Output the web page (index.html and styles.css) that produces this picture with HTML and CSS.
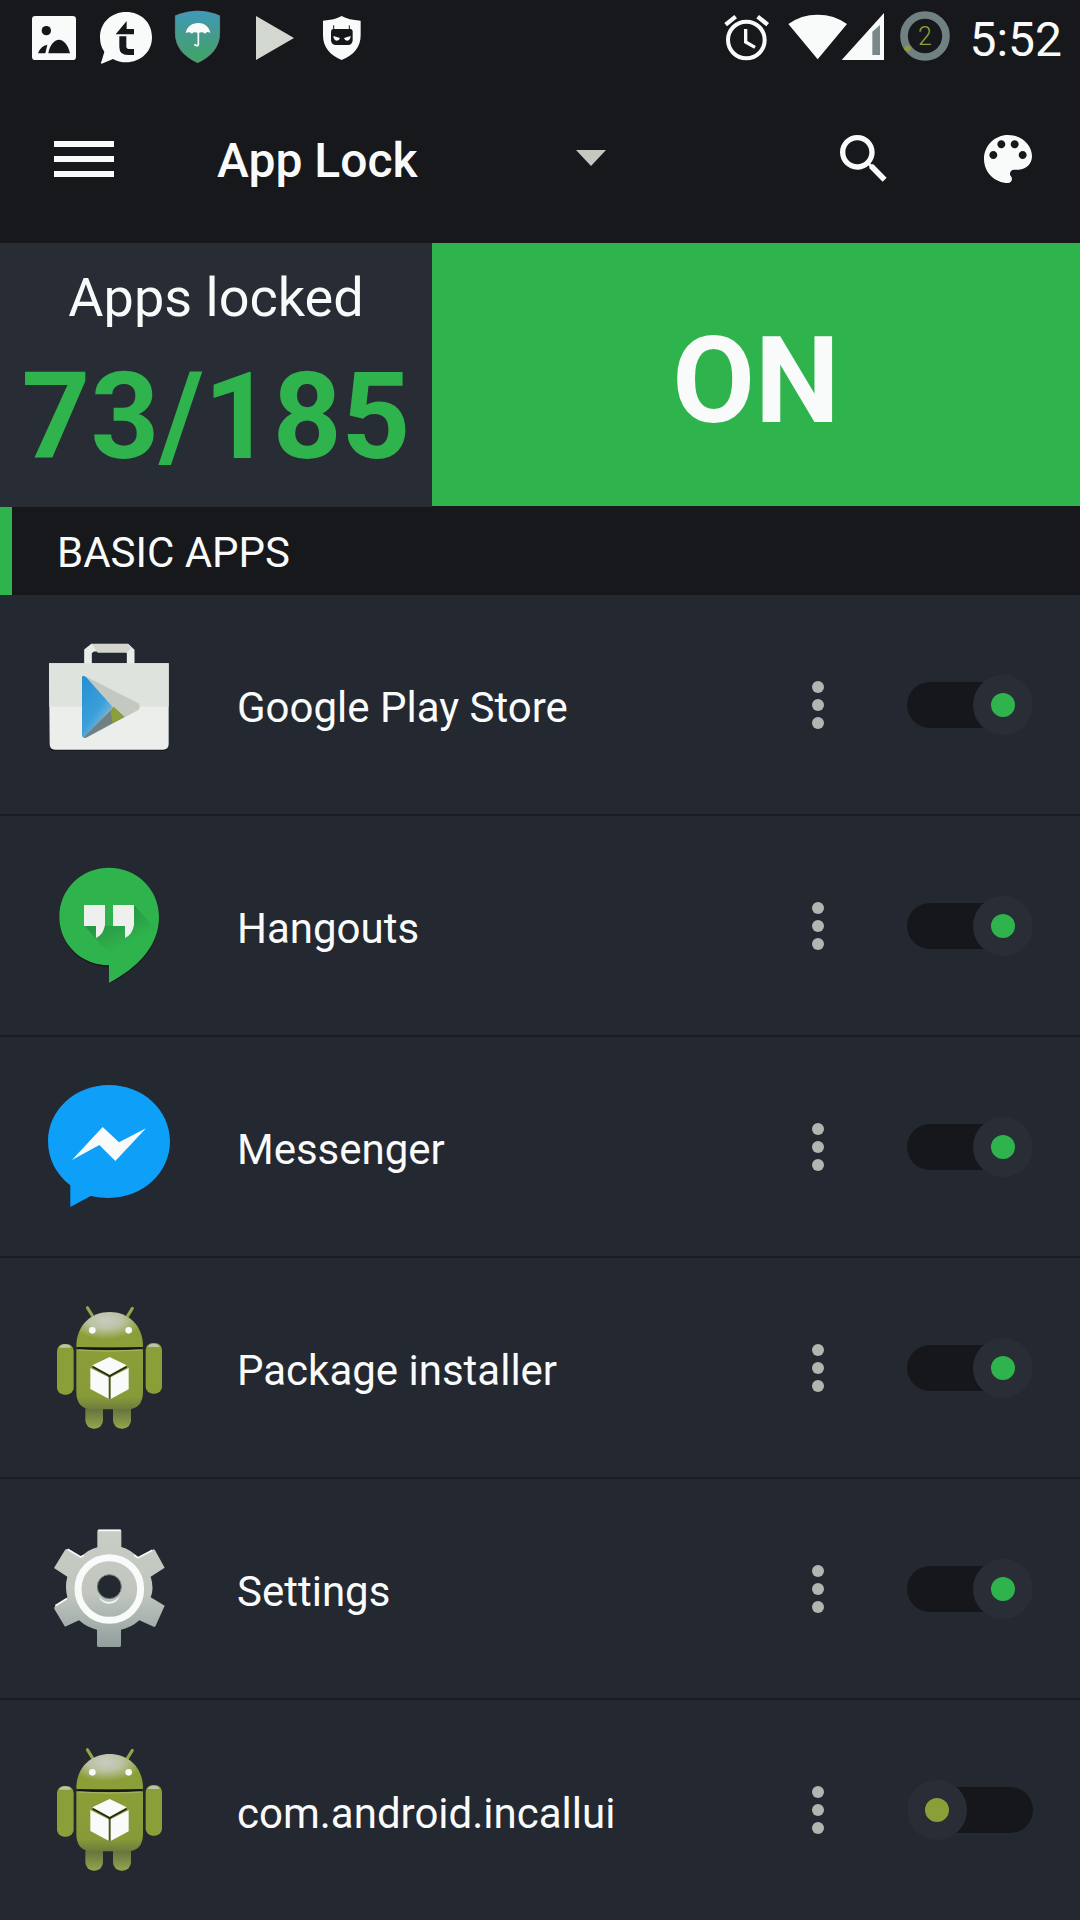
FILE: index.html
```html
<!DOCTYPE html>
<html lang="en">
<head>
<meta charset="utf-8">
<meta name="viewport" content="width=device-width, initial-scale=1">
<title>App Lock</title>
<link rel="stylesheet" href="styles.css">
</head>
<body>
<svg class="defs" width="0" height="0" aria-hidden="true">
  <defs>
    <linearGradient id="shield" x1="0" y1="0" x2="0" y2="1"><stop offset="0" stop-color="#3d9bbb"/><stop offset=".4" stop-color="#459a91"/><stop offset="1" stop-color="#3fa564"/></linearGradient>
    <linearGradient id="triangle" x1="0" y1="0" x2="0.7" y2="1"><stop offset="0" stop-color="#278fd0"/><stop offset=".6" stop-color="#3a9fdb"/><stop offset="1" stop-color="#9cc3d4"/></linearGradient>
    <linearGradient id="metal" x1="0" y1="0" x2="0" y2="1"><stop offset="0" stop-color="#c8cdc5"/><stop offset=".55" stop-color="#c0c6be"/><stop offset="1" stop-color="#929e9e"/></linearGradient>
    <radialGradient id="shine" cx=".44" cy=".22" r=".55"><stop offset="0" stop-color="#c8cdc0"/><stop offset=".45" stop-color="#bcc3a4"/><stop offset="1" stop-color="#8b9f38"/></radialGradient>
    <linearGradient id="body" x1="0" y1="0" x2="0" y2="1"><stop offset="0" stop-color="#8b9f38"/><stop offset=".8" stop-color="#869a38"/><stop offset="1" stop-color="#6d7c3e"/></linearGradient>
    <linearGradient id="leg" x1="0" y1="0" x2="0" y2="1"><stop offset="0" stop-color="#55613a"/><stop offset="1" stop-color="#93a64c"/></linearGradient>
    <linearGradient id="shadow" x1="0" y1="0" x2=".7" y2="1"><stop offset="0" stop-color="#1c6636"/><stop offset=".8" stop-color="#2fb34d"/></linearGradient>
    <symbol id="android" viewBox="0 9 480 450">
      <path d="M172 53l15 24M307 55l-15 24" stroke="#94a64a" stroke-width="9" stroke-linecap="round"/>
      <path d="M139 169C139 105 184 66 239 66s100 39 100 103q0 3-4 3H143q-4 0-4-3z" fill="url(#shine)"/>
      <circle cx="187" cy="121" r="10" fill="#f9fbfa"/><circle cx="296" cy="121" r="10" fill="#f9fbfa"/>
      <rect x="166" y="335" width="53" height="81" rx="25" fill="url(#leg)"/><rect x="249" y="335" width="54" height="81" rx="25" fill="url(#leg)"/>
      <rect x="81" y="162" width="50" height="152" rx="21" fill="#8b9f38"/><rect x="347" y="159" width="49" height="152" rx="21" fill="#8b9f38"/>
      <path d="M87 173q4-9 17-10 16 0 19 10zM353 171q4-9 17-10 16 0 19 10z" fill="#bdc4ae"/>
      <path d="M139 178q98 4 200 0v127q0 53-50 53H189q-50 0-50-53z" fill="url(#body)"/>
      <path d="M143 174q95 6 192 0" stroke="#15171b" stroke-width="6" fill="none"/>
      <path d="M145 180q95 7 188 0" stroke="#a8b66a" stroke-width="3" fill="none"/>
      <path d="M239 258v68" stroke="#4a5523" stroke-width="9"/>
      <path d="M188 230l51 28 51-28" stroke="#242820" stroke-width="5" fill="none"/>
      <path d="M187 226l52-25 51 25-51 28zM181 234l55 28v64l-55-29zM242 262l54-28v64l-54 29z" fill="#f9fbfa"/>
    </symbol>
    <symbol id="dots" viewBox="0 0 12 48"><circle cx="6" cy="6" r="6"/><circle cx="6" cy="24" r="6"/><circle cx="6" cy="42" r="6"/></symbol>
  </defs>
</svg>

<div class="status">
  <div class="notices">
    <svg class="notice" viewBox="54 0 216 225" aria-label="Screenshot saved"><rect x="96" y="48" width="132" height="132" rx="10" fill="#f9fbfa"/><g fill="#15171b"><circle cx="139" cy="92" r="14"/><path d="M114 160q8-23 28-26l-6 26zM145 160c4-25 18-41 32-41s28 16 33 41z"/></g></svg>
    <svg class="notice" viewBox="270 0 216 225" aria-label="Chat"><path d="M378 36c46 0 78 32 78 76 0 43-33 75-78 75-14 0-27-3-39-10l-34 14c-4-1-2-6 0-8l8-28c-9-12-13-27-13-43 0-44 34-76 78-76z" fill="#f9fbfa"/><path d="M347 103l33-40v24h22v16zM358 109h21v30q0 8 8 8h15v18h-18q-26 0-26-24z" fill="#15171b"/></svg>
    <svg class="notice" viewBox="486 0 216 225" aria-label="Shield"><path d="M526 47q36-14 67-14 32 0 66 14v52c0 42-25 70-66 89-42-19-67-47-67-89z" fill="url(#shield)" stroke="#7b8a8c" stroke-width="2"/><path d="M557 100c3-20 18-31 38-31s34 13 36 31q-9-8-16 1-10-8-20 0-10-8-20 0-8-8-18-1z" fill="#f9fbfa"/><path d="M595 98v33q0 6-5 6t-6-5" fill="none" stroke="#f9fbfa" stroke-width="5"/></svg>
    <svg class="notice" viewBox="702 0 216 225" aria-label="Play"><path d="M768 48l114 66-114 66z" fill="#d2d7cf"/></svg>
    <svg class="notice" viewBox="918 0 216 225" aria-label="Guard"><path d="M969 62q35-2 56-14 21 12 57 14v44c0 36-21 60-57 74-35-14-56-38-56-74z" fill="#f9fbfa"/><path d="M1001 76v15M1048 76v15" stroke="#15171b" stroke-width="3"/><path d="M999 87h53q6 0 6 8v27q-3 13-13 13h-38q-11 0-14-13V95q0-8 6-8z" fill="#15171b"/><path d="M1000 108l20 6q-2 8-10 8-9-1-10-14zM1052 108l-20 6q2 8 10 8 9-1 10-14z" fill="#f9fbfa"/></svg>
  </div>
  <div class="system">
    <svg class="alarm" viewBox="60 0 198 225" aria-label="Alarm"><g fill="none" stroke="#f9fbfa"><circle cx="142" cy="120" r="55" stroke-width="12"/><path d="M140 87v39l28 16" stroke-width="10"/><path d="M80 74l30-24M206 74l-30-24" stroke-width="13"/></g></svg>
    <svg class="signal" viewBox="258 0 324 225" aria-label="Wi-Fi and mobile signal"><path d="M268 72q38-28 88-28t88 28l-88 106zM428 180L555 39v141z" fill="#f9fbfa"/><path d="M520 95l23-20v90h-23z" fill="#7a888a"/></svg>
    <svg class="battery" viewBox="582 0 228 225" aria-hidden="true"><circle cx="678" cy="108" r="63" fill="none" stroke="#718083" stroke-width="23"/><path d="M614 147l14 9 9-13-13-8z" fill="#8b9f38"/><text class="battery-level" x="678" y="134" text-anchor="middle">2</text></svg>
    <time>5:52</time>
  </div>
</div>

<header class="appbar">
  <button class="icon-button menu" aria-label="Menu"><span></span><span></span><span></span></button>
  <div class="picker">
    <select aria-label="Profile"><option>App Lock</option></select>
  </div>
  <div class="actions">
    <button class="icon-button" aria-label="Search"><svg class="action-icon" viewBox="0 0 24 24"><path d="M15.500 14h-.79l-.28-.27C15.410 12.590 16 11.110 16 9.500 16 5.910 13.090 3 9.500 3S3 5.910 3 9.500 5.910 16 9.500 16c1.610 0 3.090-.59 4.230-1.570l.27.28v.79l5 4.990L20.490 19l-4.990-5zm-6 0C7.010 14 5 11.990 5 9.500S7.010 5 9.500 5 14 7.010 14 9.500 11.990 14 9.500 14z"/></svg></button>
    <button class="icon-button" aria-label="Themes"><svg class="action-icon" viewBox="0 0 24 24"><path d="M12 3c-4.970 0-9 4.030-9 9s4.030 9 9 9c.83 0 1.500-.67 1.500-1.500 0-.39-.15-.74-.39-1.010-.23-.26-.38-.61-.38-.99 0-.83.67-1.500 1.500-1.500H16c2.760 0 5-2.240 5-5 0-4.420-4.030-8-9-8zm-5.500 9c-.83 0-1.500-.67-1.500-1.500S5.670 9 6.500 9 8 9.670 8 10.500 7.330 12 6.500 12zm3-4C8.670 8 8 7.330 8 6.500S8.670 5 9.500 5s1.500.67 1.500 1.500S10.330 8 9.500 8zm5 0c-.83 0-1.500-.67-1.500-1.500S13.670 5 14.500 5s1.500.67 1.500 1.500S15.330 8 14.500 8zm3 4c-.83 0-1.500-.67-1.500-1.500S16.670 9 17.500 9s1.500.67 1.500 1.500-.67 1.500-1.500 1.500z"/></svg></button>
  </div>
</header>

<main>
  <section class="summary">
    <div class="count">
      <span class="count-label">Apps locked</span>
      <strong class="count-value">73/185</strong>
    </div>
    <button class="power" aria-pressed="true">ON</button>
  </section>

  <h2 class="section-title">BASIC APPS</h2>
  <ul class="apps">
    <li class="app">
      <svg class="app-icon" viewBox="0 30 480 450" aria-hidden="true">
        <path d="M68 386h338" stroke="#15171b" stroke-width="12" stroke-linecap="round"/>
        <path d="M174 134V94l14-11h102l12 11v40" fill="none" stroke="#e9ece8" stroke-width="23"/>
        <path d="M186 72h105l13 12-13 14H203z" fill="#d2d6cf"/>
        <path d="M57 130h359v242q0 17-17 17H75q-16 0-16-17z" fill="#eceeeb"/>
        <path d="M57 130h359v130H58z" fill="#dfe3dd"/>
        <path d="M156 170q3-5 13 0l156 80q9 12 0 20l-157 83q-9 4-12-4z" fill="#c3c9c0"/>
        <path d="M156 170q3-5 12 1l80 90-83 92-9-4z" fill="url(#triangle)"/>
        <path d="M251 261l32 30-115 62h-8z" fill="#718083"/>
        <path d="M251 261l32 29-36 19-5-38z" fill="#8b9f38"/>
      </svg>
      <span class="app-name" id="a1">Google Play Store</span>
      <button class="more" aria-label="More options"><svg><use href="#dots"/></svg></button>
      <input class="switch" type="checkbox" role="switch" aria-labelledby="a1" checked>
    </li>
    <li class="app">
      <svg class="app-icon" viewBox="0 3 480 450" aria-hidden="true">
        <path d="M237 58c83 0 150 62 150 148 0 87-63 150-150 196v-52c-83 0-148-64-148-144 0-86 65-148 148-148z" fill="#17191d"/>
        <path d="M237 53c83 0 150 64 150 148 0 87-63 151-150 198v-53c-83 0-149-64-149-145 0-84 66-148 149-148z" fill="#2fb34d"/>
        <path d="M164 228l50 58q29 31 60 31 84-18 106-76l-66-74-67 61z" fill="url(#shadow)" opacity=".65"/>
        <path d="M162 165h63v60q-4 28-27 39v-36h-36zM249 165h63v60q-4 28-27 39v-36h-36z" fill="#eef0ed"/>
      </svg>
      <span class="app-name" id="a2">Hangouts</span>
      <button class="more" aria-label="More options"><svg><use href="#dots"/></svg></button>
      <input class="switch" type="checkbox" role="switch" aria-labelledby="a2" checked>
    </li>
    <li class="app">
      <svg class="app-icon" viewBox="0 6 480 450" aria-hidden="true">
        <path d="M237 45c102 0 183 75 183 169s-81 170-183 170q-28 0-55-6l-61 33v-65c-41-31-67-78-67-132 0-94 81-169 183-169z" fill="#0e9ff9"/>
        <path d="M126 270l92-99 49 46 81-42-92 98-48-48z" fill="#f9fbfa"/>
      </svg>
      <span class="app-name" id="a3">Messenger</span>
      <button class="more" aria-label="More options"><svg><use href="#dots"/></svg></button>
      <input class="switch" type="checkbox" role="switch" aria-labelledby="a3" checked>
    </li>
    <li class="app">
      <svg class="app-icon" aria-hidden="true"><use href="#android"/></svg>
      <span class="app-name" id="a4">Package installer</span>
      <button class="more" aria-label="More options"><svg><use href="#dots"/></svg></button>
      <input class="switch" type="checkbox" role="switch" aria-labelledby="a4" checked>
    </li>
    <li class="app">
      <svg class="app-icon" viewBox="0 -3 480 450" aria-hidden="true">
        <path d="M206 44h65q3 0 3 4v48q27 7 51 32l43-24q5-3 7 2l29 52-42 27q11 34 0 62l42 25-27 60q-3 6-9 2l-40-18q-24 22-55 28v47q0 5-4 5h-64q-4 0-4-5v-47q-28-5-54-28l-42 19-32-53q-2-5 3-9l36-26q-8-34 0-62l-40-26 33-54q3-4 8-2l39 24q23-24 50-30V49q0-5 4-5z" fill="url(#metal)"/>
        <path d="M205 46h67M113 103l39 23 10-5M367 106l-43 22-12-8M76 272l34-21" fill="none" stroke="#f9fbfa" stroke-width="5"/>
        <circle cx="238" cy="222" r="94" fill="none" stroke="#f9fbfa" stroke-width="21"/>
        <path d="M206 245q32 32 64-1-10 22-32 22t-32-21z" fill="#f9fbfa"/>
        <circle cx="238" cy="215" r="36" fill="#242831" stroke="#718083" stroke-width="3"/>
      </svg>
      <span class="app-name" id="a5">Settings</span>
      <button class="more" aria-label="More options"><svg><use href="#dots"/></svg></button>
      <input class="switch" type="checkbox" role="switch" aria-labelledby="a5" checked>
    </li>
    <li class="app">
      <svg class="app-icon" aria-hidden="true"><use href="#android"/></svg>
      <span class="app-name" id="a6">com.android.incallui</span>
      <button class="more" aria-label="More options"><svg><use href="#dots"/></svg></button>
      <input class="switch" type="checkbox" role="switch" aria-labelledby="a6">
    </li>
  </ul>
</main>
</body>
</html>
```
FILE: styles.css
```css
:root {
  --dark: #16181c;
  --surface: #242831;
  --green: #2fb34d;
  --olive: #8b9f38;
  --white: #f9fbfa;
}

*, *::before, *::after { box-sizing: border-box; }

body {
  margin: 0;
  background: var(--surface);
  color: var(--white);
  font-family: Roboto, "Liberation Sans", sans-serif;
  font-size: 42px;
}

button, select {
  margin: 0;
  padding: 0;
  border: 0;
  background: none;
  color: inherit;
  font-family: inherit;
}

.defs { display: block; }

/* Status bar */
.status {
  display: flex;
  justify-content: space-between;
  height: 75px;
  padding: 0 18px;
  background: var(--dark);
}

.notices, .system { display: flex; align-items: center; }
.notice { width: 72px; height: 75px; }
.alarm { width: 66px; height: 75px; }
.signal { width: 108px; height: 75px; }
.battery { width: 76px; height: 75px; }
.battery-level { fill: var(--olive); font-size: 75px; font-weight: 300; }
.system time { padding-top: 4px; font-size: 48px; }

/* App bar */
.appbar {
  display: flex;
  align-items: center;
  height: 168px;
  padding: 0 40px 0 54px;
  background: var(--dark);
}

.icon-button { display: block; }
.menu { display: grid; gap: 9px; width: 60px; }
.menu span { height: 6px; background: var(--white); }

.picker {
  display: grid;
  align-items: center;
  width: 389px;
  margin-left: 103px;
}
.picker select {
  grid-area: 1 / 1;
  appearance: none;
  height: 72px;
  padding-top: 2px;
  font-size: 48px;
  font-weight: 500;
}
.picker::after {
  content: "";
  grid-area: 1 / 1;
  justify-self: end;
  width: 30px;
  height: 16px;
  margin-bottom: 2px;
  background: #c3c9c0;
  clip-path: polygon(0 0, 100% 0, 50% 100%);
  pointer-events: none;
}

.actions { display: flex; gap: 80px; margin-left: auto; }
.action-icon { display: block; width: 64px; height: 64px; fill: var(--white); }

/* Summary */
.summary { display: grid; grid-template-columns: 2fr 3fr; background: var(--dark); }
.count {
  display: flex;
  flex-direction: column;
  align-items: center;
  gap: 17px;
  padding: 23px 0 20px;
  background: #282d35;
}
.count-label { font-size: 54px; line-height: 64px; }
.count-value { color: var(--green); font-size: 120px; line-height: 140px; }
.power {
  margin-bottom: 1px;
  padding-top: 12px;
  background: var(--green);
  font-size: 120px;
  font-weight: 700;
}

.section-title {
  margin: 0;
  padding: 4px 45px 0;
  border-left: 12px solid var(--green);
  background: var(--dark);
  font-size: 42px;
  font-weight: 400;
  line-height: 84px;
}

/* App list */
.apps { margin: 0; padding: 0; list-style: none; }
.app {
  display: flex;
  align-items: center;
  height: 221px;
  padding: 0 47px 0 30px;
  border-bottom: 2px solid #1a1d22;
}
.app:last-child { height: 220px; border-bottom: 0; }
.app-icon { flex: none; width: 160px; height: 150px; }
.app-name { flex: 1; padding: 6px 0 0 47px; }

.more { width: 12px; height: 48px; margin-right: 83px; }
.more svg { display: block; width: 12px; height: 48px; fill: #afb7b0; }

.switch {
  appearance: none;
  display: flex;
  align-items: center;
  justify-content: flex-start;
  width: 126px;
  height: 46px;
  margin: 0;
  border-radius: 23px;
  background: #15171a;
}
.switch::before {
  content: "";
  flex: none;
  width: 60px;
  height: 60px;
  border: 18px solid #292d36;
  border-radius: 50%;
  background: var(--olive);
}
.switch:checked { justify-content: flex-end; }
.switch:checked::before { background: var(--green); }
```
